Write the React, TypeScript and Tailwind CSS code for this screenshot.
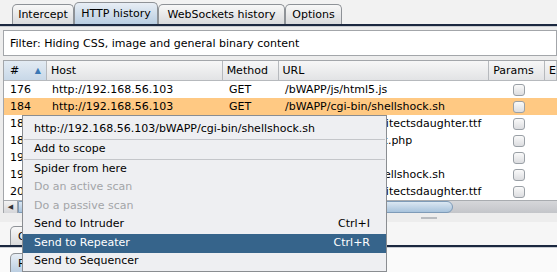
import React from "react";

const font = { fontFamily: '"DejaVu Sans", "Liberation Sans", sans-serif' };

function Checkbox() {
  return (
    <div className="w-[12px] h-[12px] rounded-[3px] border border-[#9aa0a6] bg-gradient-to-b from-[#fafafa] to-[#dcdde0]" />
  );
}

const rows = [
  { n: "176", url: "/bWAPP/js/html5.js", sel: false },
  { n: "184", url: "/bWAPP/cgi-bin/shellshock.sh", sel: true },
  { n: "185", url: "/bWAPP/fonts/architectsdaughter.ttf", sel: false },
  { n: "188", url: "/bWAPP/shellshock.php", sel: false },
  { n: "190", url: "/bWAPP/login.php", sel: false },
  { n: "196", url: "/bWAPP/cgi-bin/shellshock.sh", sel: false },
  { n: "201", url: "/bWAPP/fonts/architectsdaughter.ttf", sel: false },
];

function Tab({ label, selected, w }: { label: string; selected?: boolean; w: string }) {
  return (
    <div
      className={`${w} flex items-center justify-center border border-b-0 border-[#8e9297] rounded-t-[5px] ${
        selected
          ? "h-[22px] bg-gradient-to-b from-[#e8eef5] to-[#b9cde1]"
          : "h-[20px] bg-gradient-to-b from-[#f8f8f8] to-[#d9dadc]"
      }`}
    >
      {label}
    </div>
  );
}

export default function App() {
  return (
    <div
      className="relative w-[557px] h-[272px] overflow-hidden bg-[#ededed] text-[11px] text-black leading-none"
      style={font}
    >
      {/* main tabs */}
      <div className="flex items-end h-[24px] pl-[12px] bg-[#f2f2f2]">
        <Tab label="Intercept" w="w-[62px]" />
        <Tab label="HTTP history" w="w-[84px]" selected />
        <Tab label="WebSockets history" w="w-[127px]" />
        <Tab label="Options" w="w-[57px]" />
      </div>
      <div className="h-[2px] bg-[#1b2840]" />
      <div className="h-[1px] bg-[#c9ccd1]" />

      {/* filter */}
      <div className="pl-[3px] pt-[3px]">
        <div className="h-[26px] border border-[#a3a6aa] bg-white flex items-center pl-[6px]">
          Filter: Hiding CSS, image and general binary content
        </div>
      </div>

      {/* table */}
      <div className="pl-[3px] pt-[4px]">
        <div className="border-l border-t border-[#a3a6aa] bg-white">
          {/* header */}
          <div className="flex h-[20px] border-b border-[#b6b9bd]">
            <div className="w-[43px] flex items-center justify-between pl-[6px] pr-[5px] bg-gradient-to-b from-[#e3ebf3] to-[#c8d8e8] border-r border-[#b6b9bd]">
              <span>#</span>
              <span className="text-[#3b78b5] text-[8px]">▲</span>
            </div>
            {[
              ["Host", "w-[176px]"],
              ["Method", "w-[56px]"],
              ["URL", "w-[211px]"],
              ["Params", "w-[56px]"],
              ["E", "flex-1"],
            ].map(([t, w]) => (
              <div
                key={t}
                className={`${w} flex items-center pl-[4px] bg-gradient-to-b from-[#f7f7f7] to-[#e2e3e5] border-r border-[#b6b9bd]`}
              >
                {t}
              </div>
            ))}
          </div>
          {/* rows */}
          {rows.map((r) => (
            <div
              key={r.n + r.url}
              className={`flex h-[17px] items-center ${r.sel ? "bg-[#ffc983]" : "bg-white"}`}
            >
              <div className="w-[44px] pl-[6px]">{r.n}</div>
              <div className="w-[176px] pl-[4px]">http://192.168.56.103</div>
              <div className="w-[56px] pl-[5px]">GET</div>
              <div className="w-[211px] pl-[5px] whitespace-nowrap">{r.url}</div>
              <div className="w-[56px] flex justify-center">
                <Checkbox />
              </div>
              <div className="flex-1" />
            </div>
          ))}
          {/* horizontal scrollbar */}
          <div className="flex h-[13px] bg-gradient-to-b from-[#d6d7da] to-[#c3c5c9] border-t border-[#a9acb0]">
            <div className="w-[14px] flex items-center justify-center text-[7px] text-[#333] bg-gradient-to-b from-[#f3f3f3] to-[#d5d6d9] border-r border-[#9ea1a5]">
              ◀
            </div>
            <div className="w-[435px] rounded-r-[10px] border border-[#7e9bb8] bg-gradient-to-b from-[#dbe7f2] to-[#a8c3dc]" />
          </div>
        </div>
      </div>

      {/* splitter */}
      <div className="h-[9px] flex justify-center items-center">
        <div className="w-[16px] h-[2px] bg-[#b9bcc0] ml-[300px]" />
      </div>

      {/* lower tabs */}
      <div className="flex items-end h-[23px] pl-[10px] bg-[#f6f6f6]">
        <div className="h-[19px] w-[110px] border border-b-0 border-[#8e9297] rounded-t-[5px] bg-gradient-to-b from-[#f8f8f8] to-[#d9dadc] flex items-center pl-[7px]">
          Original request
        </div>
      </div>
      <div className="h-[2px] bg-[#1b2840]" />
      <div className="h-[1px] bg-[#c9ccd1]" />
      <div className="flex items-start h-[30px] pl-[10px] pt-[5px] bg-[#fafafa]">
        <div className="h-[20px] w-[40px] border border-b-0 border-[#8e9297] rounded-t-[5px] bg-gradient-to-b from-[#e8eef5] to-[#b9cde1] flex items-center pl-[7px]">
          Raw
        </div>
      </div>

      {/* context menu */}
      <div className="absolute left-[22px] top-[115px] w-[365px] bg-[#eeeff2] border border-[#8a8d91] pt-[3px]">
        <div className="h-[20px] flex items-center pl-[11px] pb-[2px]">
          http://192.168.56.103/bWAPP/cgi-bin/shellshock.sh
        </div>
        <div className="h-[1px] bg-[#c4c6ca] mx-[1px]" />
        <div className="h-[19px] flex items-center pl-[11px] pb-[2px]">Add to scope</div>
        <div className="h-[1px] bg-[#c4c6ca] mx-[1px]" />
        {[
          ["Spider from here", "", ""],
          ["Do an active scan", "", "dis"],
          ["Do a passive scan", "", "dis"],
          ["Send to Intruder", "Ctrl+I", ""],
          ["Send to Repeater", "Ctrl+R", "sel"],
          ["Send to Sequencer", "", ""],
        ].map(([t, k, s]) => (
          <div
            key={t}
            className={`h-[18.5px] flex items-center justify-between pl-[11px] pr-[16px] pb-[2px] ${
              s === "sel" ? "bg-[#36648b] text-white" : s === "dis" ? "text-[#a3a5a8]" : ""
            }`}
          >
            <span>{t}</span>
            <span>{k}</span>
          </div>
        ))}
      </div>
    </div>
  );
}
